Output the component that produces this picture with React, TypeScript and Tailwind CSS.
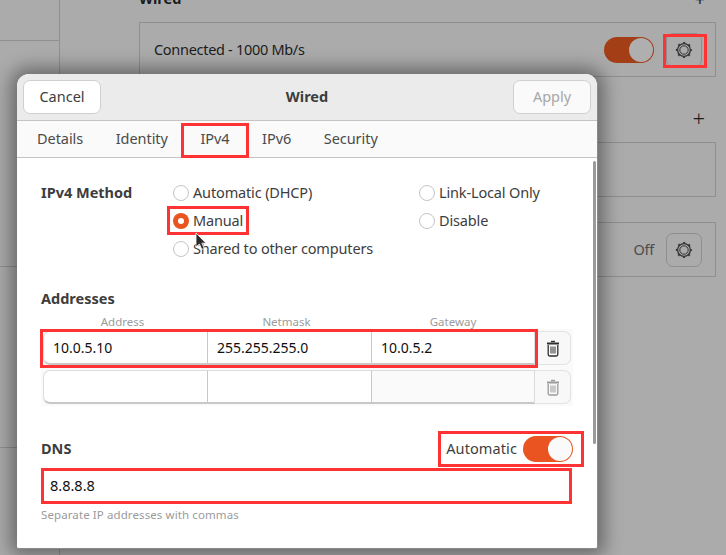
import React from 'react';

const Gear = () => (
  <svg width="18" height="18" viewBox="0 0 18 18" fill="none" stroke="#333333">
    <circle cx="9" cy="9" r="6.4" strokeWidth="1.3" />
    <circle cx="9" cy="9" r="4.2" strokeWidth="1" />
    <circle cx="9" cy="9" r="7.4" strokeWidth="1.4" strokeDasharray="2 3.81" strokeDashoffset="1" />
  </svg>
);

const Trash = ({ color }: { color: string }) => (
  <svg width="14" height="17" viewBox="0 0 14 17" fill="none" stroke={color}>
    <path d="M5 1.5h4" strokeWidth="1.4" />
    <path d="M1 3.5h12" strokeWidth="2" />
    <path d="M2.2 5v9.5a1.5 1.5 0 0 0 1.5 1.5h6.6a1.5 1.5 0 0 0 1.5-1.5V5" strokeWidth="1.3" />
    <path d="M5 6.5v7M7 6.5v7M9 6.5v7" strokeWidth="1" />
  </svg>
);

const Radio = ({ label, checked }: { label: string; checked?: boolean }) => (
  <div className="flex items-center h-7 gap-[4px]">
    {checked ? (
      <span className="w-4 h-4 rounded-full bg-[#e95420] flex items-center justify-center">
        <span className="w-[6px] h-[6px] rounded-full bg-white" />
      </span>
    ) : (
      <span className="w-4 h-4 rounded-full border border-[#c4c4c4] bg-white" />
    )}
    <span className="text-[#3d3d3d] tracking-[-0.15px]">{label}</span>
  </div>
);

const AddressRow = ({ values, disabled }: { values: string[]; disabled?: boolean }) => (
  <div className="flex h-[34px] text-[14px]">
    <div className="flex w-[492px] rounded-l-[7px] border border-[#dcdcdc] border-b-2 border-b-[#c8c8c8] bg-white overflow-hidden">
      <div className="w-[164px] pl-[9px] flex items-center border-r border-[#c8c8c8] text-[#101010]">{values[0]}</div>
      <div className="w-[164px] pl-[9px] flex items-center border-r border-[#c8c8c8] text-[#101010]">{values[1]}</div>
      <div className={`flex-1 pl-[9px] flex items-center text-[#101010] ${disabled ? 'bg-[#fafafa]' : ''}`}>{values[2]}</div>
    </div>
    <div className="w-[36px] rounded-r-[7px] border border-l-0 border-[#e2e2e2] bg-[#f8f8f8] flex items-center justify-center">
      <Trash color={disabled ? '#9a9a9a' : '#2e2e2e'} />
    </div>
  </div>
);

const Dialog = () => (
  <div className="absolute left-[17px] top-[74px] w-[581px] h-[475px] rounded-t-[12px] rounded-b-[2px] overflow-hidden bg-white border-r border-b border-[#8a8a8a] shadow-[0_0_18px_6px_rgba(0,0,0,0.4)] text-[14.5px]">
    <div className="h-[47px] bg-[#ebebeb] border-b border-[#c4c4c4] flex items-center justify-between px-[6px]">
      <button className="w-[78px] h-[34px] rounded-[7px] bg-white border border-[#cfcfcf] text-[#3d3d3d]">Cancel</button>
      <span className="font-bold text-[#3d3d3d]">Wired</span>
      <button className="w-[78px] h-[34px] rounded-[7px] bg-[#fafafa] border border-[#cfcfcf] text-[#a6a6a6]">Apply</button>
    </div>
    <div className="h-[37px] bg-[#fafafa] border-b border-[#c4c4c4] flex items-center pl-[20px] gap-[32.5px] tracking-[-0.05px] text-[#4a4a4a]">
      <span>Details</span>
      <span>Identity</span>
      <span>IPv4</span>
      <span>IPv6</span>
      <span>Security</span>
    </div>
    <div className="relative px-[24px] pt-[21px]">
      <div className="absolute right-[1px] top-[3px] w-[3px] h-[283px] rounded-full bg-[#9a9a9a]" />
      <div className="grid grid-cols-[132px_246px_auto]">
        <div className="h-7 flex items-center font-bold text-[#3d3d3d]">IPv4 Method</div>
        <div>
          <Radio label="Automatic (DHCP)" />
          <Radio label="Manual" checked />
          <Radio label="Shared to other computers" />
        </div>
        <div>
          <Radio label="Link-Local Only" />
          <Radio label="Disable" />
        </div>
      </div>
      <div className="mt-[26px] h-5 flex items-center font-bold text-[#3d3d3d]">Addresses</div>
      <div className="mt-[5px] h-[15px] w-[532px] flex items-center text-[11.5px] text-[#9b9b9b] text-center">
        <span className="w-[163px]">Address</span>
        <span className="w-[165px]">Netmask</span>
        <span className="w-[168px]">Gateway</span>
      </div>
      <div className="w-[532px] bg-[#fafafa] px-[2px] py-[2px] flex flex-col gap-[5px]">
        <AddressRow values={['10.0.5.10', '255.255.255.0', '10.0.5.2']} />
        <AddressRow values={['', '', '']} disabled />
      </div>
      <div className="mt-[30px] h-[26px] w-[532px] flex items-center justify-between">
        <span className="font-bold text-[#3d3d3d]">DNS</span>
        <div className="flex items-center gap-[6px]">
          <span className="text-[#3d3d3d] tracking-[0.1px]">Automatic</span>
          <div className="w-[50px] h-[26px] rounded-full bg-[#e95420] flex items-center justify-end pr-[1px]">
            <span className="w-[24px] h-[24px] rounded-full bg-[#fafafa]" />
          </div>
        </div>
      </div>
      <div className="mt-[9px] ml-[2px] h-[30px] w-[526px] pl-[7px] flex items-center text-[#101010]">8.8.8.8</div>
      <div className="mt-[6px] h-4 flex items-center text-[11.5px] text-[#9b9b9b] tracking-[0.1px]">Separate IP addresses with commas</div>
    </div>
  </div>
);

const highlights = [
  'left-[663px] top-[34px] w-[44px] h-[34px]',
  'left-[181px] top-[123px] w-[68px] h-[35px]',
  'left-[167px] top-[206px] w-[82px] h-[29px]',
  'left-[40px] top-[329px] w-[498px] h-[39px]',
  'left-[438px] top-[431px] w-[146px] h-[36px]',
  'left-[41px] top-[468px] w-[531px] h-[36px]',
];

export default function App() {
  return (
    <div className="relative w-[726px] h-[555px] overflow-hidden bg-[#ababab] flex font-['Noto_Sans',sans-serif] text-[14.5px] text-[#1c1c1c]">
      <div className="w-[60px] h-full border-r border-[#909090] flex flex-col">
        <div className="h-[41px] border-b border-[#909090]" />
        <div className="h-[226px] border-b border-[#909090]" />
        <div className="h-[181px] border-b border-[#909090]" />
      </div>
      <div className="flex-1 pl-[79px] pr-[10px]">
        <div className="-mt-[11px] h-5 flex items-center justify-between font-bold pr-[11px]">
          <span>Wired</span>
          <span className="font-normal text-[18px]">+</span>
        </div>
        <div className="mt-[13px] h-[55px] border border-[#8f8f8f] flex items-center justify-between pl-[14px] pr-[13px]">
          <span className="tracking-[-0.3px]">Connected - 1000 Mb/s</span>
          <div className="flex items-center gap-[12px]">
            <div className="w-[50px] h-[26px] rounded-full bg-[#a33e16] flex items-center justify-end pr-[1px]">
              <span className="w-[24px] h-[24px] rounded-full bg-[#afafaf]" />
            </div>
            <div className="w-[36px] h-[34px] rounded-[7px] border border-[#8f8f8f] flex items-center justify-center">
              <Gear />
            </div>
          </div>
        </div>
        <div className="mt-[31px] h-5 flex items-center justify-end pr-[11px] text-[22px] font-light">+</div>
        <div className="mt-[14px] h-[55px] border border-[#8f8f8f]" />
        <div className="mt-[25px] h-[55px] border border-[#8f8f8f] flex items-center justify-end gap-[12px] pr-[13px]">
          <span className="text-[#4d4d4d] tracking-[-0.3px]">Off</span>
          <div className="w-[36px] h-[34px] rounded-[7px] border border-[#8f8f8f] flex items-center justify-center">
            <Gear />
          </div>
        </div>
      </div>
      <Dialog />
      {highlights.map((h) => (
        <div key={h} className={`absolute border-[3px] border-[#ff3333] ${h}`} />
      ))}
      <svg className="absolute left-[195px] top-[232px]" width="12" height="19" viewBox="0 0 12 19">
        <path d="M1 1v14l3.4-3 2.4 5.4 2.4-1-2.4-5.2H11z" fill="#2a2a2a" stroke="#ffffff" strokeWidth="0.8" />
      </svg>
    </div>
  );
}
